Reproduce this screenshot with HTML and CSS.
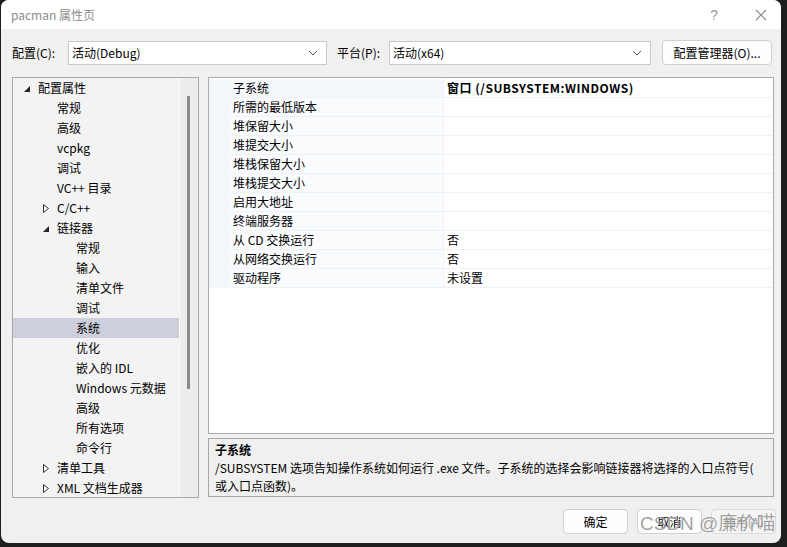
FILE: index.html
```html
<!DOCTYPE html>
<html>
<head>
  <title>pacman 属性页</title>
  <link rel="stylesheet" href="styles.css">
</head>
<body>
  <div class="window">
    <div class="titlebar">
      <span class="title">pacman 属性页</span>
      <span class="help">?</span>
      <svg class="close" width="12" height="12" viewBox="0 0 12 12"><path d="M1 1L11 11M11 1L1 11" stroke="#888" stroke-width="1.1" fill="none"/></svg>
    </div>

    <div class="toolbar">
      <label>配置(C):</label>
      <div class="select cfg">活动(Debug)<svg width="10" height="6" viewBox="0 0 10 6"><path d="M1 1L5 5L9 1" stroke="#555" fill="none"/></svg></div>
      <label class="plat-label">平台(P):</label>
      <div class="select plat">活动(x64)<svg width="10" height="6" viewBox="0 0 10 6"><path d="M1 1L5 5L9 1" stroke="#555" fill="none"/></svg></div>
      <button class="btn mgr">配置管理器(O)...</button>
    </div>

    <div class="main">
      <div class="tree">
        <ul class="nodes">
          <li class="l0"><svg class="open" viewBox="0 0 6 6"><path d="M6 0V6H0Z"/></svg>配置属性</li>
          <li class="l1">常规</li>
          <li class="l1">高级</li>
          <li class="l1">vcpkg</li>
          <li class="l1">调试</li>
          <li class="l1">VC++ 目录</li>
          <li class="l1 has"><svg class="shut" viewBox="0 0 6 9"><path d="M0.5 0.5L5.5 4.5L0.5 8.5Z"/></svg>C/C++</li>
          <li class="l1 has"><svg class="open" viewBox="0 0 6 6"><path d="M6 0V6H0Z"/></svg>链接器</li>
          <li class="l2">常规</li>
          <li class="l2">输入</li>
          <li class="l2">清单文件</li>
          <li class="l2">调试</li>
          <li class="l2 selected">系统</li>
          <li class="l2">优化</li>
          <li class="l2">嵌入的 IDL</li>
          <li class="l2">Windows 元数据</li>
          <li class="l2">高级</li>
          <li class="l2">所有选项</li>
          <li class="l2">命令行</li>
          <li class="l1 has"><svg class="shut" viewBox="0 0 6 9"><path d="M0.5 0.5L5.5 4.5L0.5 8.5Z"/></svg>清单工具</li>
          <li class="l1 has"><svg class="shut" viewBox="0 0 6 9"><path d="M0.5 0.5L5.5 4.5L0.5 8.5Z"/></svg>XML 文档生成器</li>
        </ul>
        <div class="scroll"><div class="thumb"></div></div>
      </div>

      <div class="right">
        <div class="grid">
          <div class="gutter"></div>
          <div class="rows">
            <div class="row first"><span class="name">子系统</span><span class="value bold">窗口 (/SUBSYSTEM:WINDOWS)</span></div>
            <div class="row"><span class="name">所需的最低版本</span><span class="value"></span></div>
            <div class="row"><span class="name">堆保留大小</span><span class="value"></span></div>
            <div class="row"><span class="name">堆提交大小</span><span class="value"></span></div>
            <div class="row"><span class="name">堆栈保留大小</span><span class="value"></span></div>
            <div class="row"><span class="name">堆栈提交大小</span><span class="value"></span></div>
            <div class="row"><span class="name">启用大地址</span><span class="value"></span></div>
            <div class="row"><span class="name">终端服务器</span><span class="value"></span></div>
            <div class="row"><span class="name">从 CD 交换运行</span><span class="value">否</span></div>
            <div class="row"><span class="name">从网络交换运行</span><span class="value">否</span></div>
            <div class="row"><span class="name">驱动程序</span><span class="value">未设置</span></div>
          </div>
        </div>
        <div class="desc">
          <div class="desc-title">子系统</div>
          <div class="desc-text">/SUBSYSTEM 选项告知操作系统如何运行 .exe 文件。子系统的选择会影响链接器将选择的入口点符号(<br>或入口点函数)。</div>
        </div>
      </div>
    </div>

    <div class="footer">
      <button class="btn">确定</button>
      <button class="btn">取消</button>
      <button class="btn disabled">应用(A)</button>
    </div>

    <div class="watermark">CSDN @廉价喵</div>
  </div>
</body>
</html>
```

FILE: styles.css
```css
html, body {
  margin: 0;
  padding: 0;
  background: #1e1e1e;
}

body {
  font-family: "Noto Sans CJK SC", "Noto Sans", sans-serif;
  font-size: 12px;
  color: #000;
}

.window {
  position: relative;
  width: 780px;
  height: 543px;
  margin-left: 1px;
  background: #f0f0f0;
  border-radius: 8px;
  overflow: hidden;
}

.titlebar {
  height: 29px;
  background: #fff;
  display: flex;
  align-items: center;
  padding-left: 10px;
}

.title {
  color: #8c8c8c;
  font-size: 12px;
  flex: 1;
}

.help {
  color: #999;
  font-size: 14px;
  margin-right: 37px;
  font-family: "Liberation Sans", sans-serif;
}

.close {
  margin-right: 14px;
}

.toolbar {
  display: flex;
  align-items: center;
  padding: 11px 0 0 11px;
  height: 25px;
}

.toolbar label {
  width: 56px;
}

.toolbar .plat-label {
  width: 52px;
  margin-left: 10px;
}

.select {
  border: 1px solid #c8c8c8;
  background: #fff;
  display: flex;
  align-items: center;
  justify-content: space-between;
  padding: 0 8px 0 3px;
  box-sizing: border-box;
  height: 24px;
}

.select.cfg {
  width: 259px;
}

.select.plat {
  width: 262px;
}

.btn {
  font-family: inherit;
  font-size: 12px;
  background: #fdfdfd;
  border: 1px solid #d0d0d0;
  border-radius: 4px;
  height: 25px;
  width: 65px;
  padding: 0;
  color: #000;
}

.btn.mgr {
  width: 110px;
  margin-left: 11px;
}

.btn.disabled {
  color: #a0a0a0;
  background: #f5f5f5;
  border-color: #dadada;
}

.main {
  display: flex;
  margin: 12px 0 0 11px;
  gap: 9px;
}

.tree {
  width: 187px;
  height: 421px;
  box-sizing: border-box;
  border: 1px solid #a8a8a8;
  background: #f3f3f3;
  display: flex;
}

.nodes {
  list-style: none;
  margin: 0;
  padding: 0;
  width: 166px;
}

.nodes li {
  height: 20px;
  line-height: 20px;
  position: relative;
  white-space: nowrap;
}

.nodes .l0 { padding-left: 25px; }
.nodes .l1 { padding-left: 44px; }
.nodes .l2 { padding-left: 63px; }

.nodes li.selected {
  background: #cdcfdc;
}

.nodes svg {
  position: absolute;
  top: 50%;
}

.nodes .open {
  width: 6px;
  height: 6px;
  fill: #222;
  margin-top: -2px;
}

.nodes .shut {
  width: 6px;
  height: 9px;
  fill: #fff;
  stroke: #333;
  stroke-width: 1;
  margin-top: -4px;
}

.l0 .open { left: 11px; }
.l1 .open { left: 30px; }
.l1 .shut { left: 30px; }

.scroll {
  flex: 1;
  border-left: 1px solid #f8f8f8;
  background: #ededed;
  position: relative;
}

.thumb {
  position: absolute;
  left: 7px;
  top: 18px;
  width: 3px;
  height: 293px;
  background: #8a8a8a;
}

.right {
  display: flex;
  flex-direction: column;
  gap: 4px;
  width: 566px;
}

.grid {
  height: 357px;
  box-sizing: border-box;
  border: 1px solid #a8a8a8;
  background: #fff;
  display: flex;
  padding-top: 1px;
}

.gutter {
  width: 21px;
  background: #f4f7fb;
  height: 209px;
}

.rows {
  flex: 1;
}

.row {
  display: flex;
  height: 19px;
  line-height: 18px;
  border-bottom: 1px solid #eef2f8;
  box-sizing: border-box;
}

.row .name {
  width: 214px;
  padding-left: 3px;
  border-right: 1px solid #eef2f8;
  box-sizing: border-box;
  background: #fafbfd;
}

.row.first .name {
  background: #f4f7fb;
}

.row .value {
  flex: 1;
  padding-left: 3px;
}

.bold {
  font-weight: bold;
  letter-spacing: 0.5px;
}

.desc {
  height: 59px;
  box-sizing: border-box;
  border: 1px solid #a8a8a8;
  padding: 2px 6px;
  line-height: 18px;
}

.desc-title {
  font-weight: bold;
}

.footer {
  display: flex;
  justify-content: flex-end;
  gap: 9px;
  padding: 11px 5px 0 0;
}

.watermark {
  position: absolute;
  z-index: 2;
  left: 639px;
  top: 508px;
  font-size: 19px;
  color: rgba(100, 100, 100, 0.6);
  text-shadow: 0 0 1px rgba(255, 255, 255, 0.8);
  font-family: "Liberation Sans", "Noto Sans CJK SC", sans-serif;
  white-space: nowrap;
  pointer-events: none;
}
```
